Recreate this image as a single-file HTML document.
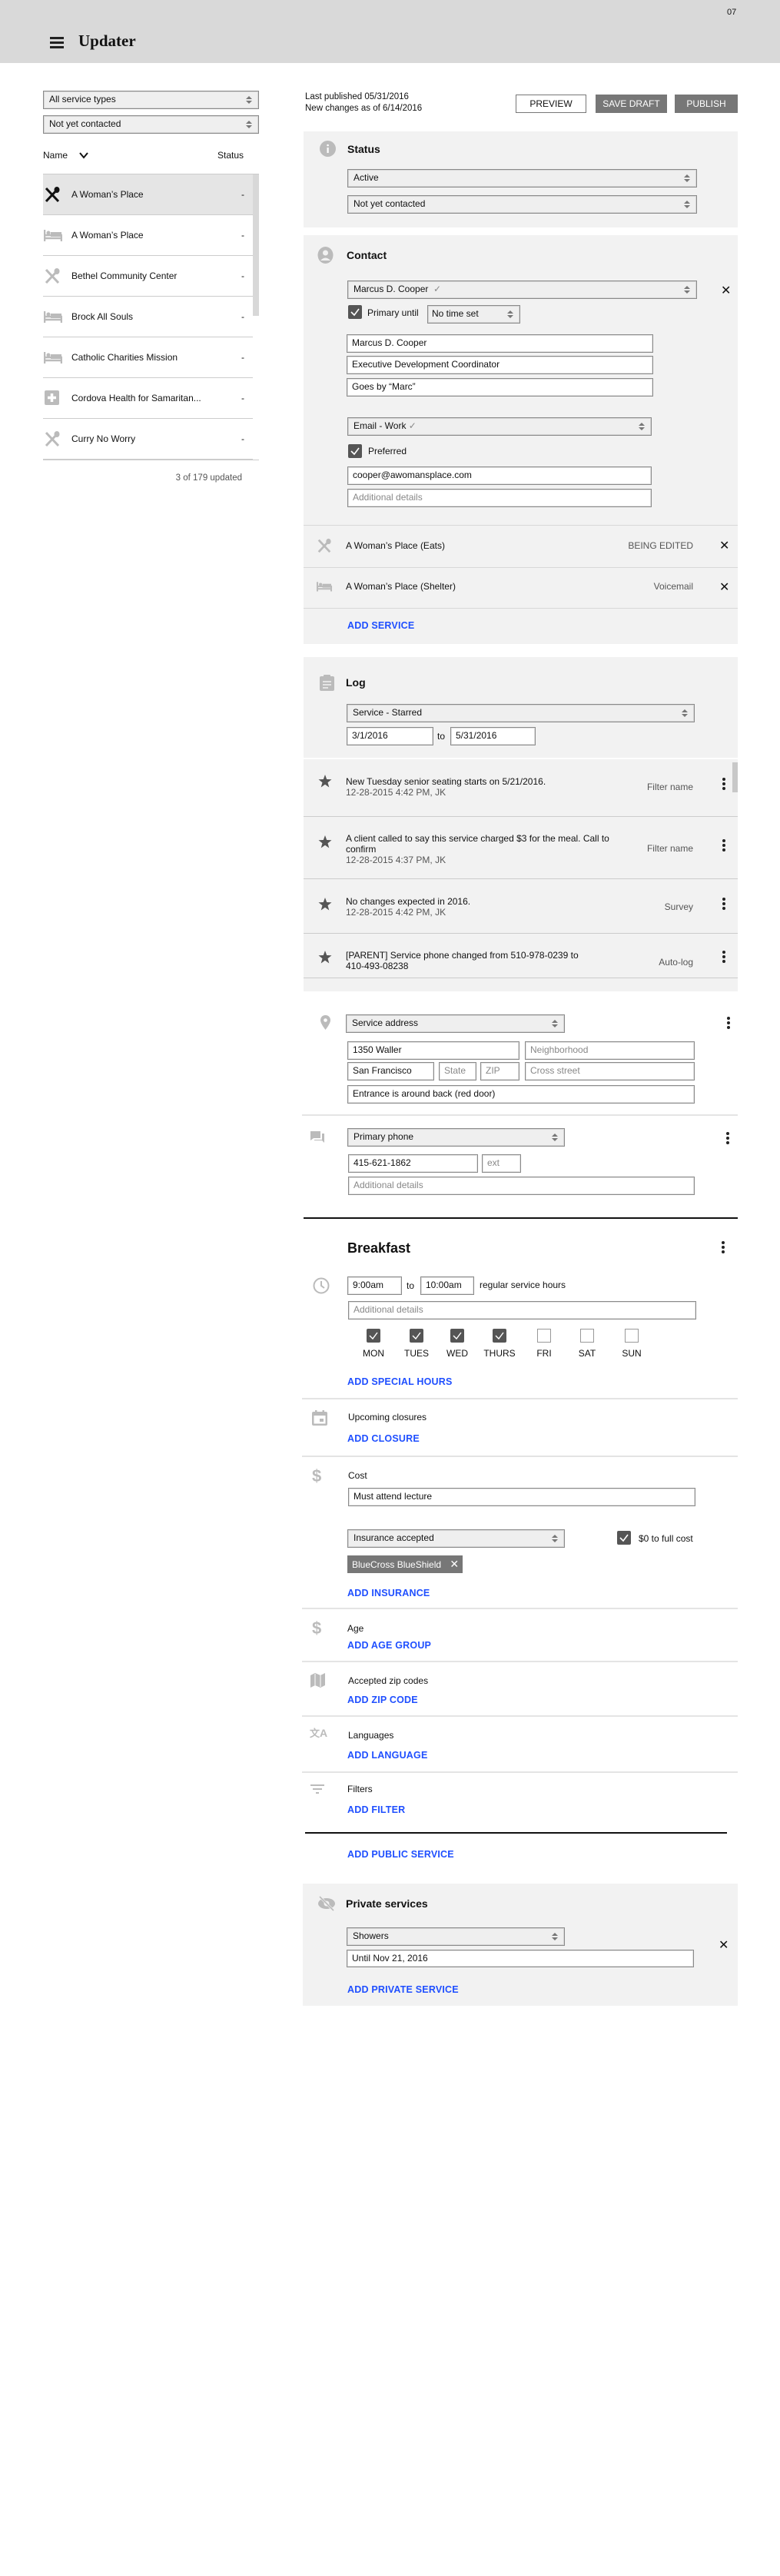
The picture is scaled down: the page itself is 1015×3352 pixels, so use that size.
<!DOCTYPE html>
<html><head><meta charset="utf-8">
<style>
*{box-sizing:border-box;margin:0;padding:0}
body{width:1015px;height:3352px;position:relative;background:#fff;font-family:"Liberation Sans",Arial,sans-serif;font-size:12px;color:#111;overflow:hidden}
.a{position:absolute}
.s{position:absolute;background:#efefef;border:1px solid #8a8a8a;box-shadow:inset 0 0 0 1px #d6d6d6;padding-left:7px;line-height:21px;font-size:12px;white-space:nowrap}
.s::after{content:"";position:absolute;right:8px;top:6px;width:0;height:0;border-left:4px solid transparent;border-right:4px solid transparent;border-bottom:4px solid #777}
.s::before{content:"";position:absolute;right:8px;top:12px;width:0;height:0;border-left:4px solid transparent;border-right:4px solid transparent;border-top:4px solid #777}
.i{position:absolute;background:#fff;border:1px solid #8a8a8a;box-shadow:inset 0 0 0 1px #e2e2e2;padding-left:6px;line-height:21px;font-size:12px;white-space:nowrap}
.ph{color:#888}
.panel{position:absolute;background:#f2f2f2}
.h{position:absolute;font-weight:bold;font-size:14px}
.blue{position:absolute;color:#1f4fff;font-weight:bold;font-size:12.5px;letter-spacing:.2px}
.sep{position:absolute;height:2px;background:#e4e4e4}
.dots{position:absolute;width:4px}
.dots i{display:block;width:4px;height:4px;border-radius:50%;background:#222;margin-bottom:2px}
.cb{position:absolute;width:18px;height:18px;background:#555;border-radius:2px}
.cb svg{position:absolute;left:2px;top:2px}
.cbe{position:absolute;width:18px;height:18px;background:#fff;border:1px solid #999}
.row{position:absolute;left:56px;width:273px;height:53px;border-bottom:1px solid #ccc}
.row .t{position:absolute;left:37px;top:19px}
.row .d{position:absolute;left:258px;top:19px}
.row svg{position:absolute;left:1px;top:15px}
.x{position:absolute;font-size:16px;color:#111}
.gray{color:#555}
</style></head><body>
<!-- header -->
<div class="a" style="left:0;top:0;width:1015px;height:82px;background:#d9d9d9"></div>
<div class="a" style="left:946px;top:10px;font-size:11px">07</div>
<div class="a" style="left:65px;top:48px;width:18px;height:3px;background:#222"></div>
<div class="a" style="left:65px;top:54px;width:18px;height:3px;background:#222"></div>
<div class="a" style="left:65px;top:60px;width:18px;height:3px;background:#222"></div>
<div class="a" style="left:102px;top:41px;font-family:'Liberation Serif',serif;font-weight:bold;font-size:21px">Updater</div>

<!-- left -->
<div class="s" style="left:56px;top:118px;width:281px;height:24px">All service types</div>
<div class="s" style="left:56px;top:150px;width:281px;height:24px">Not yet contacted</div>
<div class="a" style="left:56px;top:195px">Name</div>
<svg class="a" style="left:103px;top:197px" width="12" height="10"><path d="M1 2 L6 8 L11 2" stroke="#111" stroke-width="2" fill="none"/></svg>
<div class="a" style="left:283px;top:195px">Status</div>
<div class="a" style="left:56px;top:226px;width:281px;height:1px;background:#ccc"></div>
<div class="a" style="left:329px;top:227px;width:8px;height:184px;background:#d8d8d8"></div>

<div class="row" style="top:227px;background:#e5e5e5"><svg width="22" height="22" viewBox="0 0 22 22"><path d="M3 3 L19 20 M19 3 L3 20" stroke="#111" stroke-width="3"/><ellipse cx="17" cy="5" rx="3.5" ry="4" fill="#111"/></svg><span class="t">A Woman’s Place</span><span class="d">-</span></div>
<div class="row" style="top:280px"><svg width="24" height="22" viewBox="0 0 24 22"><path d="M1 4 V19 M1 15 H23 V19 M1 11 H23 V15" stroke="#bbb" stroke-width="2.5" fill="none"/><rect x="9" y="7" width="14" height="6" fill="#bbb"/><circle cx="6" cy="8" r="2.5" fill="#bbb"/></svg><span class="t">A Woman’s Place</span><span class="d">-</span></div>
<div class="row" style="top:333px"><svg width="22" height="22" viewBox="0 0 22 22"><path d="M3 3 L19 20 M19 3 L3 20" stroke="#bbb" stroke-width="3"/><ellipse cx="17" cy="5" rx="3.5" ry="4" fill="#bbb"/></svg><span class="t">Bethel Community Center</span><span class="d">-</span></div>
<div class="row" style="top:386px"><svg width="24" height="22" viewBox="0 0 24 22"><path d="M1 4 V19 M1 15 H23 V19 M1 11 H23 V15" stroke="#bbb" stroke-width="2.5" fill="none"/><rect x="9" y="7" width="14" height="6" fill="#bbb"/><circle cx="6" cy="8" r="2.5" fill="#bbb"/></svg><span class="t">Brock All Souls</span><span class="d">-</span></div>
<div class="row" style="top:439px"><svg width="24" height="22" viewBox="0 0 24 22"><path d="M1 4 V19 M1 15 H23 V19 M1 11 H23 V15" stroke="#bbb" stroke-width="2.5" fill="none"/><rect x="9" y="7" width="14" height="6" fill="#bbb"/><circle cx="6" cy="8" r="2.5" fill="#bbb"/></svg><span class="t">Catholic Charities Mission</span><span class="d">-</span></div>
<div class="row" style="top:492px"><svg width="22" height="22" viewBox="0 0 22 22"><rect x="1" y="1" width="19" height="19" rx="2" fill="#bbb"/><path d="M10.5 5 V16 M5 10.5 H16" stroke="#fff" stroke-width="3.5"/></svg><span class="t">Cordova Health for Samaritan...</span><span class="d">-</span></div>
<div class="row" style="top:545px"><svg width="22" height="22" viewBox="0 0 22 22"><path d="M3 3 L19 20 M19 3 L3 20" stroke="#bbb" stroke-width="3"/><ellipse cx="17" cy="5" rx="3.5" ry="4" fill="#bbb"/></svg><span class="t">Curry No Worry</span><span class="d">-</span></div>
<div class="a" style="left:56px;top:598px;width:281px;height:1px;background:#ccc"></div>
<div class="a gray" style="left:220px;top:616px;width:95px;text-align:right;font-size:11.5px">3 of 179 updated</div>

<!-- top right -->
<div class="a" style="left:397px;top:119px;line-height:15px;font-size:11.5px">Last published 05/31/2016<br>New changes as of 6/14/2016</div>
<div class="a" style="left:671px;top:123px;width:92px;height:24px;border:1px solid #777;text-align:center;line-height:22px;font-size:12px">PREVIEW</div>
<div class="a" style="left:775px;top:123px;width:93px;height:24px;background:#777;color:#fff;text-align:center;line-height:24px;font-size:12px">SAVE DRAFT</div>
<div class="a" style="left:878px;top:123px;width:82px;height:24px;background:#777;color:#fff;text-align:center;line-height:24px;font-size:12px">PUBLISH</div>

<!-- status -->
<div class="panel" style="left:395px;top:171px;width:565px;height:125px"></div>
<svg class="a" style="left:416px;top:183px" width="21" height="21"><circle cx="10.5" cy="10.5" r="10.5" fill="#bbb"/><rect x="9.5" y="9" width="2.2" height="7" fill="#fff"/><circle cx="10.6" cy="6" r="1.3" fill="#fff"/></svg>
<div class="h" style="left:452px;top:186px">Status</div>
<div class="s" style="left:452px;top:220px;width:455px;height:24px">Active</div>
<div class="s" style="left:452px;top:254px;width:455px;height:24px">Not yet contacted</div>

<!-- contact -->
<div class="panel" style="left:395px;top:306px;width:565px;height:532px"></div>
<svg class="a" style="left:413px;top:321px" width="21" height="22"><ellipse cx="10.5" cy="11" rx="10" ry="11" fill="#bbb"/><circle cx="10.5" cy="8" r="3.5" fill="#f2f2f2"/><path d="M4 18 Q10.5 11 17 18" fill="#f2f2f2"/></svg>
<div class="h" style="left:451px;top:324px">Contact</div>
<div class="s" style="left:452px;top:365px;width:455px;height:24px">Marcus D. Cooper &nbsp;<span style="color:#888">✓</span></div>
<div class="x" style="left:938px;top:368px">✕</div>
<div class="cb" style="left:453px;top:397px"><svg width="14" height="14"><path d="M2 7 L6 11 L12 3" stroke="#fff" stroke-width="1.6" fill="none"/></svg></div>
<div class="a" style="left:478px;top:400px">Primary until</div>
<div class="s" style="left:556px;top:397px;width:121px;height:24px;padding-left:5px">No time set</div>
<div class="i" style="left:451px;top:435px;width:399px;height:24px">Marcus D. Cooper</div>
<div class="i" style="left:451px;top:463px;width:399px;height:24px">Executive Development Coordinator</div>
<div class="i" style="left:451px;top:492px;width:399px;height:24px">Goes by “Marc”</div>
<div class="s" style="left:452px;top:543px;width:396px;height:24px">Email - Work <span style="color:#888">✓</span></div>
<div class="cb" style="left:453px;top:578px"><svg width="14" height="14"><path d="M2 7 L6 11 L12 3" stroke="#fff" stroke-width="1.6" fill="none"/></svg></div>
<div class="a" style="left:479px;top:580px">Preferred</div>
<div class="i" style="left:452px;top:607px;width:396px;height:24px">cooper@awomansplace.com</div>
<div class="i ph" style="left:452px;top:636px;width:396px;height:24px">Additional details</div>
<div class="sep" style="left:395px;top:683px;width:565px;height:1px;background:#d8d8d8"></div>
<svg class="a" style="left:411px;top:700px" width="22" height="20" viewBox="0 0 22 22"><path d="M3 3 L19 20 M19 3 L3 20" stroke="#bbb" stroke-width="3"/><ellipse cx="17" cy="5" rx="3.5" ry="4" fill="#bbb"/></svg>
<div class="a" style="left:450px;top:703px">A Woman’s Place (Eats)</div>
<div class="a gray" style="left:760px;top:703px;width:142px;text-align:right">BEING EDITED</div>
<div class="x" style="left:936px;top:700px">✕</div>
<div class="sep" style="left:395px;top:738px;width:565px;height:1px;background:#d8d8d8"></div>
<svg class="a" style="left:410px;top:754px" width="24" height="18" viewBox="0 0 24 22"><path d="M1 4 V19 M1 15 H23 V19 M1 11 H23 V15" stroke="#bbb" stroke-width="2.5" fill="none"/><rect x="9" y="7" width="14" height="6" fill="#bbb"/><circle cx="6" cy="8" r="2.5" fill="#bbb"/></svg>
<div class="a" style="left:450px;top:756px">A Woman’s Place (Shelter)</div>
<div class="a gray" style="left:760px;top:756px;width:142px;text-align:right">Voicemail</div>
<div class="x" style="left:936px;top:754px">✕</div>
<div class="sep" style="left:395px;top:791px;width:565px;height:1px;background:#d8d8d8"></div>
<div class="blue" style="left:452px;top:807px">ADD SERVICE</div>

<!-- log -->
<div class="panel" style="left:395px;top:855px;width:565px;height:435px"></div>
<svg class="a" style="left:416px;top:877px" width="19" height="22"><rect x="0" y="3" width="19" height="19" rx="2" fill="#bbb"/><rect x="5" y="1" width="9" height="5" rx="1" fill="#bbb"/><path d="M4 10 H15 M4 14 H15 M4 18 H11" stroke="#f2f2f2" stroke-width="1.5"/></svg>
<div class="h" style="left:450px;top:880px">Log</div>
<div class="s" style="left:451px;top:916px;width:453px;height:24px">Service - Starred</div>
<div class="i" style="left:451px;top:946px;width:113px;height:24px">3/1/2016</div>
<div class="a" style="left:569px;top:951px">to</div>
<div class="i" style="left:586px;top:946px;width:111px;height:24px">5/31/2016</div>
<div class="a" style="left:395px;top:986px;width:565px;height:2px;background:#fff"></div>
<div class="a" style="left:953px;top:992px;width:7px;height:39px;background:#c8c8c8"></div>

<svg class="a" style="left:414px;top:1008px" width="18" height="17"><path d="M9 0 L11.2 6 L17.5 6.3 L12.5 10.2 L14.3 16.5 L9 12.8 L3.7 16.5 L5.5 10.2 L0.5 6.3 L6.8 6 Z" fill="#555"/></svg>
<div class="a" style="left:450px;top:1010px;line-height:14px">New Tuesday senior seating starts on 5/21/2016.<br><span class="gray">12-28-2015 4:42 PM, JK</span></div>
<div class="a gray" style="left:780px;top:1017px;width:122px;text-align:right">Filter name</div>
<div class="dots" style="left:940px;top:1012px"><i></i><i></i><i></i></div>
<div class="sep" style="left:395px;top:1062px;width:565px;height:1px;background:#ccc"></div>

<svg class="a" style="left:414px;top:1087px" width="18" height="17"><path d="M9 0 L11.2 6 L17.5 6.3 L12.5 10.2 L14.3 16.5 L9 12.8 L3.7 16.5 L5.5 10.2 L0.5 6.3 L6.8 6 Z" fill="#555"/></svg>
<div class="a" style="left:450px;top:1084px;line-height:14px;width:380px">A client called to say this service charged $3 for the meal. Call to confirm<br><span class="gray">12-28-2015 4:37 PM, JK</span></div>
<div class="a gray" style="left:780px;top:1097px;width:122px;text-align:right">Filter name</div>
<div class="dots" style="left:940px;top:1092px"><i></i><i></i><i></i></div>
<div class="sep" style="left:395px;top:1143px;width:565px;height:1px;background:#ccc"></div>

<svg class="a" style="left:414px;top:1168px" width="18" height="17"><path d="M9 0 L11.2 6 L17.5 6.3 L12.5 10.2 L14.3 16.5 L9 12.8 L3.7 16.5 L5.5 10.2 L0.5 6.3 L6.8 6 Z" fill="#555"/></svg>
<div class="a" style="left:450px;top:1166px;line-height:14px">No changes expected in 2016.<br><span class="gray">12-28-2015 4:42 PM, JK</span></div>
<div class="a gray" style="left:780px;top:1173px;width:122px;text-align:right">Survey</div>
<div class="dots" style="left:940px;top:1168px"><i></i><i></i><i></i></div>
<div class="sep" style="left:395px;top:1214px;width:565px;height:1px;background:#ccc"></div>

<svg class="a" style="left:414px;top:1237px" width="18" height="17"><path d="M9 0 L11.2 6 L17.5 6.3 L12.5 10.2 L14.3 16.5 L9 12.8 L3.7 16.5 L5.5 10.2 L0.5 6.3 L6.8 6 Z" fill="#555"/></svg>
<div class="a" style="left:450px;top:1236px;line-height:14px">[PARENT] Service phone changed from 510-978-0239 to<br>410-493-08238</div>
<div class="a gray" style="left:780px;top:1245px;width:122px;text-align:right">Auto-log</div>
<div class="dots" style="left:940px;top:1237px"><i></i><i></i><i></i></div>
<div class="sep" style="left:395px;top:1272px;width:565px;height:1px;background:#ccc"></div>

<!-- address -->
<svg class="a" style="left:417px;top:1321px" width="13" height="19"><path d="M6.5 0 C2.5 0 0 3 0 6.5 C0 11 6.5 19 6.5 19 C6.5 19 13 11 13 6.5 C13 3 10.5 0 6.5 0 Z" fill="#bbb"/><circle cx="6.5" cy="6.5" r="2.3" fill="#fff"/></svg>
<div class="s" style="left:450px;top:1320px;width:285px;height:24px">Service address</div>
<div class="dots" style="left:946px;top:1323px"><i></i><i></i><i></i></div>
<div class="i" style="left:452px;top:1355px;width:224px;height:24px">1350 Waller</div>
<div class="i ph" style="left:683px;top:1355px;width:221px;height:24px">Neighborhood</div>
<div class="i" style="left:452px;top:1382px;width:113px;height:24px">San Francisco</div>
<div class="i ph" style="left:571px;top:1382px;width:49px;height:24px">State</div>
<div class="i ph" style="left:625px;top:1382px;width:51px;height:24px">ZIP</div>
<div class="i ph" style="left:683px;top:1382px;width:221px;height:24px">Cross street</div>
<div class="i" style="left:452px;top:1412px;width:452px;height:24px">Entrance is around back (red door)</div>
<div class="sep" style="left:393px;top:1450px;width:567px"></div>

<svg class="a" style="left:404px;top:1472px" width="18" height="15"><path d="M0 0 H13 V9 H4 L0 12 Z" fill="#bbb"/><path d="M15 3 H18 V15 L15 12 H5 V11 H15 Z" fill="#bbb"/></svg>
<div class="s" style="left:452px;top:1468px;width:283px;height:24px">Primary phone</div>
<div class="dots" style="left:945px;top:1473px"><i></i><i></i><i></i></div>
<div class="i" style="left:453px;top:1502px;width:169px;height:24px">415-621-1862</div>
<div class="i ph" style="left:627px;top:1502px;width:51px;height:24px">ext</div>
<div class="i ph" style="left:453px;top:1531px;width:451px;height:24px">Additional details</div>

<div class="a" style="left:395px;top:1584px;width:565px;height:2px;background:#111"></div>

<!-- breakfast -->
<div class="a" style="left:452px;top:1614px;font-weight:bold;font-size:18px">Breakfast</div>
<div class="dots" style="left:939px;top:1615px"><i></i><i></i><i></i></div>
<svg class="a" style="left:407px;top:1662px" width="22" height="22"><circle cx="11" cy="11" r="9.5" stroke="#bbb" stroke-width="2" fill="none"/><path d="M11 5 V11 L15 14" stroke="#bbb" stroke-width="2" fill="none"/></svg>
<div class="i" style="left:452px;top:1661px;width:71px;height:24px">9:00am</div>
<div class="a" style="left:529px;top:1666px">to</div>
<div class="i" style="left:547px;top:1661px;width:70px;height:24px">10:00am</div>
<div class="a" style="left:624px;top:1665px">regular service hours</div>
<div class="i ph" style="left:453px;top:1693px;width:453px;height:24px">Additional details</div>
<div class="cb" style="left:477px;top:1729px"><svg width="14" height="14"><path d="M2 7 L6 11 L12 3" stroke="#fff" stroke-width="1.4" fill="none"/></svg></div>
<div class="cb" style="left:533px;top:1729px"><svg width="14" height="14"><path d="M2 7 L6 11 L12 3" stroke="#fff" stroke-width="1.4" fill="none"/></svg></div>
<div class="cb" style="left:586px;top:1729px"><svg width="14" height="14"><path d="M2 7 L6 11 L12 3" stroke="#fff" stroke-width="1.4" fill="none"/></svg></div>
<div class="cb" style="left:641px;top:1729px"><svg width="14" height="14"><path d="M2 7 L6 11 L12 3" stroke="#fff" stroke-width="1.4" fill="none"/></svg></div>
<div class="cbe" style="left:699px;top:1729px"></div>
<div class="cbe" style="left:755px;top:1729px"></div>
<div class="cbe" style="left:813px;top:1729px"></div>
<div class="a" style="left:466px;top:1754px;width:40px;text-align:center">MON</div>
<div class="a" style="left:522px;top:1754px;width:40px;text-align:center">TUES</div>
<div class="a" style="left:575px;top:1754px;width:40px;text-align:center">WED</div>
<div class="a" style="left:625px;top:1754px;width:50px;text-align:center">THURS</div>
<div class="a" style="left:688px;top:1754px;width:40px;text-align:center">FRI</div>
<div class="a" style="left:744px;top:1754px;width:40px;text-align:center">SAT</div>
<div class="a" style="left:802px;top:1754px;width:40px;text-align:center">SUN</div>
<div class="blue" style="left:452px;top:1791px">ADD SPECIAL HOURS</div>
<div class="sep" style="left:393px;top:1819px;width:567px"></div>

<svg class="a" style="left:406px;top:1835px" width="20" height="20"><rect x="0" y="2" width="20" height="18" rx="2" fill="#bbb"/><rect x="2.5" y="7" width="15" height="10.5" fill="#fff"/><rect x="10" y="11" width="5" height="4" fill="#bbb"/><rect x="4" y="0" width="2.5" height="4" fill="#bbb"/><rect x="13.5" y="0" width="2.5" height="4" fill="#bbb"/></svg>
<div class="a" style="left:453px;top:1837px">Upcoming closures</div>
<div class="blue" style="left:452px;top:1865px">ADD CLOSURE</div>
<div class="sep" style="left:393px;top:1894px;width:567px"></div>

<div class="a" style="left:406px;top:1908px;font-size:22px;color:#bbb;font-weight:bold">$</div>
<div class="a" style="left:453px;top:1913px">Cost</div>
<div class="i" style="left:453px;top:1936px;width:452px;height:24px">Must attend lecture</div>
<div class="s" style="left:452px;top:1990px;width:283px;height:24px">Insurance accepted</div>
<div class="cb" style="left:803px;top:1992px"><svg width="14" height="14"><path d="M2 7 L6 11 L12 3" stroke="#fff" stroke-width="1.6" fill="none"/></svg></div>
<div class="a" style="left:831px;top:1995px">$0 to full cost</div>
<div class="a" style="left:452px;top:2024px;width:150px;height:23px;background:#777;color:#fff;line-height:23px;padding-left:6px">BlueCross BlueShield <span style="margin-left:8px;font-size:14px">✕</span></div>
<div class="blue" style="left:452px;top:2066px">ADD INSURANCE</div>
<div class="sep" style="left:393px;top:2092px;width:567px"></div>

<div class="a" style="left:406px;top:2106px;font-size:22px;color:#bbb;font-weight:bold">$</div>
<div class="a" style="left:452px;top:2112px">Age</div>
<div class="blue" style="left:452px;top:2134px">ADD AGE GROUP</div>
<div class="sep" style="left:393px;top:2161px;width:567px"></div>

<svg class="a" style="left:404px;top:2177px" width="19" height="19"><path d="M0 3 L6 0 L13 3 L19 0 V16 L13 19 L6 16 L0 19 Z" fill="#bbb"/><path d="M6 1 V16 M13 3 V18" stroke="#fff" stroke-width="1"/></svg>
<div class="a" style="left:453px;top:2180px">Accepted zip codes</div>
<div class="blue" style="left:452px;top:2205px">ADD ZIP CODE</div>
<div class="sep" style="left:393px;top:2232px;width:567px"></div>

<div class="a" style="left:403px;top:2245px;font-size:13px;color:#bbb;font-weight:bold">文<span style="font-size:14px">A</span></div>
<div class="a" style="left:453px;top:2251px">Languages</div>
<div class="blue" style="left:452px;top:2277px">ADD LANGUAGE</div>
<div class="sep" style="left:393px;top:2305px;width:567px"></div>

<div class="a" style="left:404px;top:2322px;width:18px;height:2px;background:#bbb"></div>
<div class="a" style="left:407px;top:2327px;width:12px;height:2px;background:#bbb"></div>
<div class="a" style="left:411px;top:2332px;width:4px;height:2px;background:#bbb"></div>
<div class="a" style="left:452px;top:2321px">Filters</div>
<div class="blue" style="left:452px;top:2348px">ADD FILTER</div>
<div class="a" style="left:397px;top:2384px;width:549px;height:2px;background:#111"></div>
<div class="blue" style="left:452px;top:2406px">ADD PUBLIC SERVICE</div>

<!-- private -->
<div class="panel" style="left:394px;top:2451px;width:566px;height:159px"></div>
<svg class="a" style="left:413px;top:2467px" width="24" height="20"><ellipse cx="12" cy="10" rx="11" ry="7" fill="#bbb"/><circle cx="12" cy="10" r="3.5" fill="#f2f2f2"/><path d="M3 1 L21 19" stroke="#f2f2f2" stroke-width="3"/><path d="M3 1 L21 19" stroke="#bbb" stroke-width="1.6"/></svg>
<div class="h" style="left:450px;top:2469px">Private services</div>
<div class="s" style="left:451px;top:2508px;width:284px;height:24px">Showers</div>
<div class="i" style="left:451px;top:2537px;width:452px;height:23px">Until Nov 21, 2016</div>
<div class="x" style="left:935px;top:2521px">✕</div>
<div class="blue" style="left:452px;top:2582px">ADD PRIVATE SERVICE</div>
</body></html>
